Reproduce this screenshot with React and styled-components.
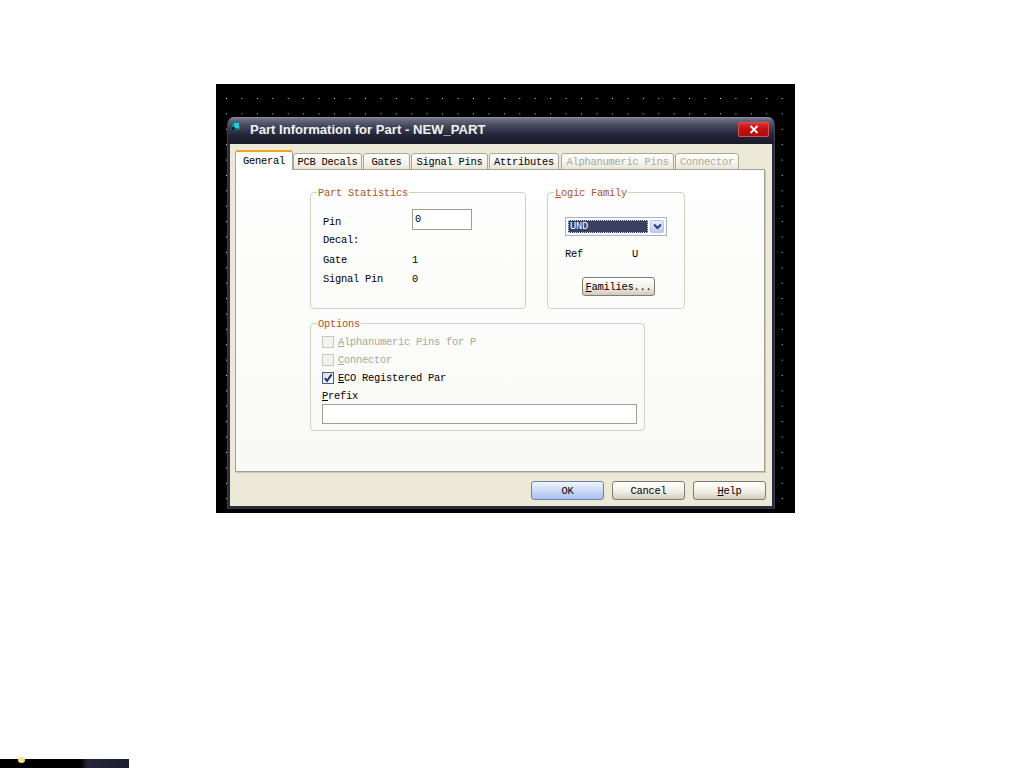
import React from "react";
import styled, { createGlobalStyle } from "styled-components";

const Global = createGlobalStyle`
  html, body { margin: 0; padding: 0; background: #fff; }
  body { font-family: "Liberation Mono", "DejaVu Sans Mono", monospace; font-size: 10.4px; letter-spacing: -0.24px; color: #000; }
  * { box-sizing: border-box; }
`;

const Page = styled.div`
  width: 1024px;
  height: 768px;
  overflow: hidden;
  background: #fefefe;
  padding-top: 84px;
`;

const Canvas = styled.div`
  width: 579px;
  height: 429px;
  margin-left: 216px;
  padding: 33px 20px 4px 11px;
  background-color: #000;
  background-image: radial-gradient(circle at 0.5px 0.5px, #e4e4e4 0.75px, transparent 0.9px);
  background-size: 15.44px 15.4px;
  background-position: 10px 14px;
`;

const Win = styled.div`
  width: 548px;
  height: 392px;
  display: flex;
  flex-direction: column;
  border-radius: 7px 7px 0 0;
  background: #2b2d3d;
  padding: 0 2px 3px;
  border-left: 1px solid #3c3e50;
  border-right: 1px solid #3c3e50;
  overflow: hidden;
`;

const TitleBar = styled.div`
  flex: 0 0 27px;
  margin: 0 -3px;
  display: flex;
  align-items: center;
  padding: 0 6px 2px 4px;
  background: linear-gradient(#8a8d9f 0, #65687c 3px, #44465a 9px, #23253a 18px, #191a26 27px);
`;

const AppIcon = styled.svg`
  width: 10px;
  height: 10px;
  flex: none;
  align-self: flex-start;
  margin-top: 4px;
`;

const Title = styled.span`
  margin-left: 9px;
  font-family: "Liberation Sans", Arial, sans-serif;
  font-weight: 700;
  font-size: 13.1px;
  letter-spacing: 0;
  color: #f2f2f2;
  white-space: nowrap;
`;

const CloseBtn = styled.div`
  margin-left: auto;
  margin-top: 0;
  width: 31px;
  height: 15px;
  border-radius: 2px;
  display: flex;
  align-items: center;
  justify-content: center;
  background: linear-gradient(#e03a3a, #c40f14 45%, #a80d10);
  box-shadow: inset 0 0 0 1px #d85050;
`;

const Client = styled.div`
  flex: 1;
  background: #ece9d8;
  padding: 7px 7px 0 5px;
  display: flex;
  flex-direction: column;
`;

const TabRow = styled.div`
  height: 19px;
  display: flex;
  align-items: flex-end;
  position: relative;
  z-index: 1;
  margin-bottom: -1px;
`;

const Tab = styled.div`
  width: ${(p) => p.$w}px;
  margin-right: ${(p) => p.$gap ?? 1}px;
  height: ${(p) => (p.$active ? 20 : 17)}px;
  display: flex;
  align-items: center;
  justify-content: center;
  white-space: nowrap;
  border: 1px solid #a9a897;
  border-bottom: ${(p) => (p.$active ? "none" : "1px solid #a9a897")};
  border-top: ${(p) => (p.$active ? "2px solid #e6a71e" : "1px solid #a9a897")};
  border-radius: 3px 3px 0 0;
  padding-top: ${(p) => (p.$active ? 0 : 1)}px;
  color: ${(p) => (p.$off ? "#a8a89c" : "#000")};
  background: ${(p) => (p.$active ? "#fdfdfc" : "linear-gradient(#fff, #f3f1e8 70%, #e7e4d5)")};
`;

const Panel = styled.div`
  height: 303px;
  border: 1px solid #a3a292;
  box-shadow: 1px 1px 0 #c9c7b6;
  background: linear-gradient(#fefefe, #f9f9f6);
  padding: 16px 0 0 74px;
  display: grid;
  grid-template-columns: 216px 138px;
  grid-template-rows: 123px 114px;
  column-gap: 21px;
  row-gap: 8px;
  align-content: start;
`;

const Group = styled.fieldset`
  margin: 0;
  padding: 0;
  min-width: 0;
  border: 1px solid #d0d0c4;
  border-radius: 4px;
  grid-column: ${(p) => p.$span || "auto"};
  width: ${(p) => p.$w || "auto"};
  height: 100%;
`;

const Legend = styled.legend`
  margin-left: 6px;
  padding: 0 1px;
  height: 12px;
  line-height: 14px;
  color: #b0541c;
`;

const Key = styled.span`
  text-decoration: underline;
`;

const Stats = styled.div`
  display: grid;
  grid-template-columns: 89px 60px;
  grid-template-rows: 22px 20px 20px 18px;
  align-items: center;
  padding: 10px 0 0 12px;
`;

const LowLabel = styled.span`
  align-self: end;
  line-height: 16px;
`;

const TextBox = styled.div`
  height: ${(p) => p.$h || 21}px;
  width: ${(p) => p.$w || "100%"};
  border: 1px solid #9e9e94;
  background: #fff;
  padding: 2px 0 0 2px;
  line-height: 14px;
`;

const Logic = styled.div`
  display: flex;
  flex-direction: column;
  padding: 19px 0 0 17px;
`;

const Combo = styled.div`
  width: 102px;
  height: 19px;
  border: 1px solid #a6b4c8;
  background: #fff;
  padding: 2px;
  display: flex;
  gap: 2px;
`;

const ComboValue = styled.div`
  width: 80px;
  background: #3a4060;
  outline: 1px dotted #d8d8d8;
  outline-offset: -1px;
  color: #fff;
  padding-left: 2px;
  line-height: 13px;
`;

const ComboArrow = styled.div`
  width: 14px;
  border: 1px solid #b5c6e6;
  border-radius: 2px;
  background: linear-gradient(#e6eefc, #bccdf0);
  display: flex;
  align-items: center;
  justify-content: center;
`;

const RefRow = styled.div`
  margin-top: 12px;
  display: grid;
  grid-template-columns: 67px auto;
  line-height: 13px;
`;

const Btn = styled.div`
  width: 73px;
  height: 19px;
  flex: none;
  border: 1px solid ${(p) => (p.$primary ? "#6f81a8" : "#7f7d72")};
  border-radius: 3px;
  display: flex;
  align-items: center;
  justify-content: center;
  background: ${(p) =>
    p.$primary
      ? "linear-gradient(#f2f5fd, #cfdcf6 45%, #a9bfee)"
      : "linear-gradient(#fff, #f1efe6 55%, #cfcabb)"};
  margin: ${(p) => p.$margin || "0"};
`;

const Options = styled.div`
  display: flex;
  flex-direction: column;
  padding: 4px 7px 0 11px;
`;

const CheckRow = styled.div`
  height: 18px;
  display: flex;
  align-items: center;
  gap: 4px;
  color: ${(p) => (p.$off ? "#a8a89c" : "#000")};
`;

const Box = styled.div`
  width: 12px;
  height: 12px;
  flex: none;
  border: 1px solid ${(p) => (p.$off ? "#c8c8bc" : "#4c5c84")};
  background: ${(p) => (p.$off ? "#f3f3ee" : "linear-gradient(135deg, #d8dce6, #fff)")};
  display: flex;
  align-items: center;
  justify-content: center;
  overflow: visible;
`;

const PrefixLabel = styled.div`
  height: 17px;
  line-height: 18px;
`;

const Footer = styled.div`
  flex: 1;
  display: flex;
  justify-content: flex-end;
  gap: 8px;
  padding: 9px 0 0 0;
  margin-right: -1px;
`;

const Dock = styled.div`
  width: 129px;
  height: 9px;
  margin-top: 246px;
  position: relative;
  background: linear-gradient(90deg, #000 0, #000 62%, #25263a 68%, #1c1d30 100%);
`;

const Glow = styled.div`
  position: absolute;
  left: 18px;
  top: -2px;
  width: 7px;
  height: 6px;
  border-radius: 50%;
  background: #f5e58a;
`;

export default function App() {
  return (
    <Page>
      <Global />
      <Canvas>
        <Win>
          <TitleBar>
            <AppIcon viewBox="0 0 10 10">
              <rect x="1" y="1" width="8" height="8" fill="#0a7f8c" />
              <rect x="3" y="2" width="5" height="5" fill="#30c8d8" />
              <rect x="1" y="6" width="3" height="3" fill="#0a2a30" />
            </AppIcon>
            <Title>Part Information for Part - NEW_PART</Title>
            <CloseBtn>
              <svg width="10" height="9" viewBox="0 0 10 9">
                <path d="M1.5 1l7 7M8.5 1l-7 7" stroke="#fff" strokeWidth="1.8" />
              </svg>
            </CloseBtn>
          </TitleBar>
          <Client>
            <TabRow>
              <Tab $active $w={58} $gap={0}>General</Tab>
              <Tab $w={69}>PCB Decals</Tab>
              <Tab $w={47}>Gates</Tab>
              <Tab $w={77}>Signal Pins</Tab>
              <Tab $w={70} $gap={2}>Attributes</Tab>
              <Tab $off $w={113}>Alphanumeric Pins</Tab>
              <Tab $off $w={64}>Connector</Tab>
            </TabRow>
            <Panel>
              <Group>
                <Legend>Part Statistics</Legend>
                <Stats>
                  <LowLabel>Pin</LowLabel>
                  <TextBox $w="60px">0</TextBox>
                  <span>Decal:</span>
                  <span />
                  <span>Gate</span>
                  <span>1</span>
                  <span>Signal Pin</span>
                  <span>0</span>
                </Stats>
              </Group>
              <Group>
                <Legend><Key>L</Key>ogic Family</Legend>
                <Logic>
                  <Combo>
                    <ComboValue>UND</ComboValue>
                    <ComboArrow>
                      <svg width="9" height="7" viewBox="0 0 9 7">
                        <path d="M1 1.5l3.5 3.5L8 1.5" fill="none" stroke="#2c3f7c" strokeWidth="2" />
                      </svg>
                    </ComboArrow>
                  </Combo>
                  <RefRow>
                    <span>Ref</span>
                    <span>U</span>
                  </RefRow>
                  <Btn $margin="16px 0 0 17px"><Key>F</Key>amilies...</Btn>
                </Logic>
              </Group>
              <Group $span="1 / 3" $w="335px">
                <Legend>Options</Legend>
                <Options>
                  <CheckRow $off><Box $off /><span><Key>A</Key>lphanumeric Pins for P</span></CheckRow>
                  <CheckRow $off><Box $off /><span><Key>C</Key>onnector</span></CheckRow>
                  <CheckRow>
                    <Box>
                      <svg width="11" height="11" viewBox="0 0 11 11">
                        <path d="M2 5l2.5 3L9.5 1" fill="none" stroke="#24327a" strokeWidth="2.2" />
                      </svg>
                    </Box>
                    <span><Key>E</Key>CO Registered Par</span>
                  </CheckRow>
                  <PrefixLabel><Key>P</Key>refix</PrefixLabel>
                  <TextBox $h={20} />
                </Options>
              </Group>
            </Panel>
            <Footer>
              <Btn $primary>OK</Btn>
              <Btn>Cancel</Btn>
              <Btn><Key>H</Key>elp</Btn>
            </Footer>
          </Client>
        </Win>
      </Canvas>
      <Dock><Glow /></Dock>
    </Page>
  );
}
